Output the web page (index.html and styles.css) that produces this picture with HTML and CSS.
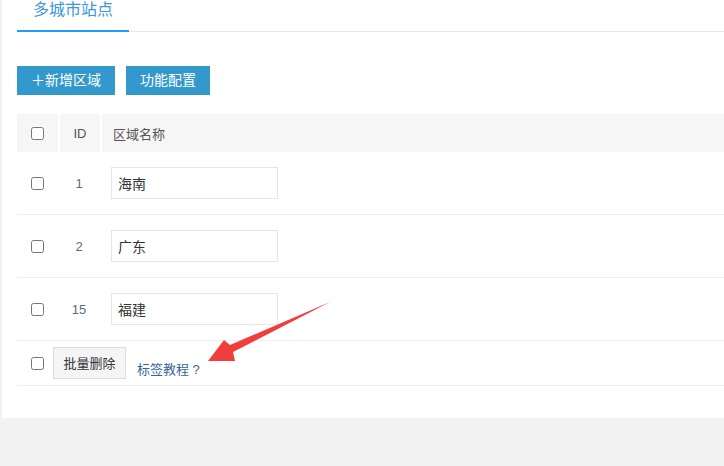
FILE: index.html
```html
<!DOCTYPE html>
<html lang="zh-CN">
<head>
  <meta charset="UTF-8">
  <title>多城市站点</title>
  <link rel="stylesheet" href="styles.css">
</head>
<body>
  <div class="panel">
    <!-- Tabs -->
    <div class="tab-title">
      <div class="tab active">多城市站点</div>
    </div>

    <!-- Toolbar -->
    <div class="toolbar">
      <a class="btn">＋新增区域</a>
      <a class="btn">功能配置</a>
    </div>

    <!-- Region list -->
    <table class="list">
      <thead>
        <tr>
          <th class="c-check"><input type="checkbox"></th>
          <th class="c-id">ID</th>
          <th class="c-name">区域名称</th>
        </tr>
      </thead>
      <tbody>
        <tr>
          <td class="c-check"><input type="checkbox"></td>
          <td class="c-id">1</td>
          <td class="c-name"><input class="field" type="text" value="海南"></td>
        </tr>
        <tr>
          <td class="c-check"><input type="checkbox"></td>
          <td class="c-id">2</td>
          <td class="c-name"><input class="field" type="text" value="广东"></td>
        </tr>
        <tr>
          <td class="c-check"><input type="checkbox"></td>
          <td class="c-id">15</td>
          <td class="c-name"><input class="field" type="text" value="福建"></td>
        </tr>
        <tr class="foot">
          <td colspan="3">
            <div class="foot-bar">
              <input type="checkbox">
              <button class="btn-gray">批量删除</button>
              <a class="help">标签教程 ?</a>
            </div>
          </td>
        </tr>
      </tbody>
    </table>

    <!-- annotation arrow -->
    <svg class="arrow" width="724" height="466" viewBox="0 0 724 466">
      <polygon points="330,302 233,352 235,361 208,361 224,340 230,345" fill="#f23d3d"/>
    </svg>
  </div>
</body>
</html>
```

FILE: styles.css
```css
body {
  margin: 0;
  background: #f2f2f2;
  font-family: "Liberation Sans", "Noto Sans CJK SC", sans-serif;
  color: #666;
}

.panel {
  margin-left: 2px;
  background: #fff;
  padding: 0 0 32px 15px;
  overflow: hidden;
}

/* tabs */
.tab-title {
  display: flex;
  height: 31px;
  border-bottom: 1px solid #e6e6e6;
}

.tab {
  width: 112px;
  height: 30px;
  font-size: 16px;
  line-height: 20px;
  text-align: center;
  color: #3c95dd;
}

.tab.active {
  border-bottom: 2px solid #1e9fff;
}

/* toolbar */
.toolbar {
  display: flex;
  gap: 11px;
  margin-top: 34px;
}

.btn {
  display: block;
  height: 29px;
  line-height: 29px;
  padding: 0 14px;
  background: #3399cc;
  color: #fff;
  font-size: 14px;
}

/* table */
.list {
  width: 100%;
  margin-top: 19px;
  border-collapse: separate;
  border-spacing: 0;
  font-size: 13px;
}

.list th {
  height: 38px;
  padding: 0;
  background: #f6f6f6;
  font-weight: normal;
  color: #555;
  border-left: 2px solid #fff;
}

.list th:first-child {
  border-left: 0;
}

.list td {
  padding: 15px 0;
  border-bottom: 1px solid #eee;
  vertical-align: middle;
}

.list input[type="checkbox"] {
  display: block;
  width: 13px;
  height: 13px;
  margin: 0 auto;
}

.c-check { width: 41px; }

.c-id {
  width: 40px;
  text-align: center;
  color: #5a6a8a;
}

.list th.c-id { color: #555; }

.list th.c-name {
  text-align: left;
  padding-left: 11px;
}

.list td.c-name {
  padding-left: 11px;
}

.field {
  display: block;
  box-sizing: border-box;
  width: 167px;
  height: 32px;
  border: 1px solid #e6e6e6;
  padding: 0 6px;
  font: 14px "Noto Sans CJK SC", sans-serif;
  color: #333;
  outline: none;
}

/* footer row */
.list .foot td {
  padding: 6px 0;
}

.foot-bar {
  display: flex;
  align-items: center;
  padding-left: 14px;
}

.foot-bar input[type="checkbox"] {
  margin: 0 9px 0 0;
}

.btn-gray {
  width: 73px;
  height: 32px;
  background: #f5f5f5;
  border: 1px solid #dcdcdc;
  font: 13px "Noto Sans CJK SC", sans-serif;
  color: #333;
  padding: 0 0 2px;
  margin-right: 11px;
}

.help {
  color: #336699;
  font-size: 13px;
  margin-top: 10px;
}

.arrow {
  position: absolute;
  left: 0;
  top: 0;
  pointer-events: none;
}
```
